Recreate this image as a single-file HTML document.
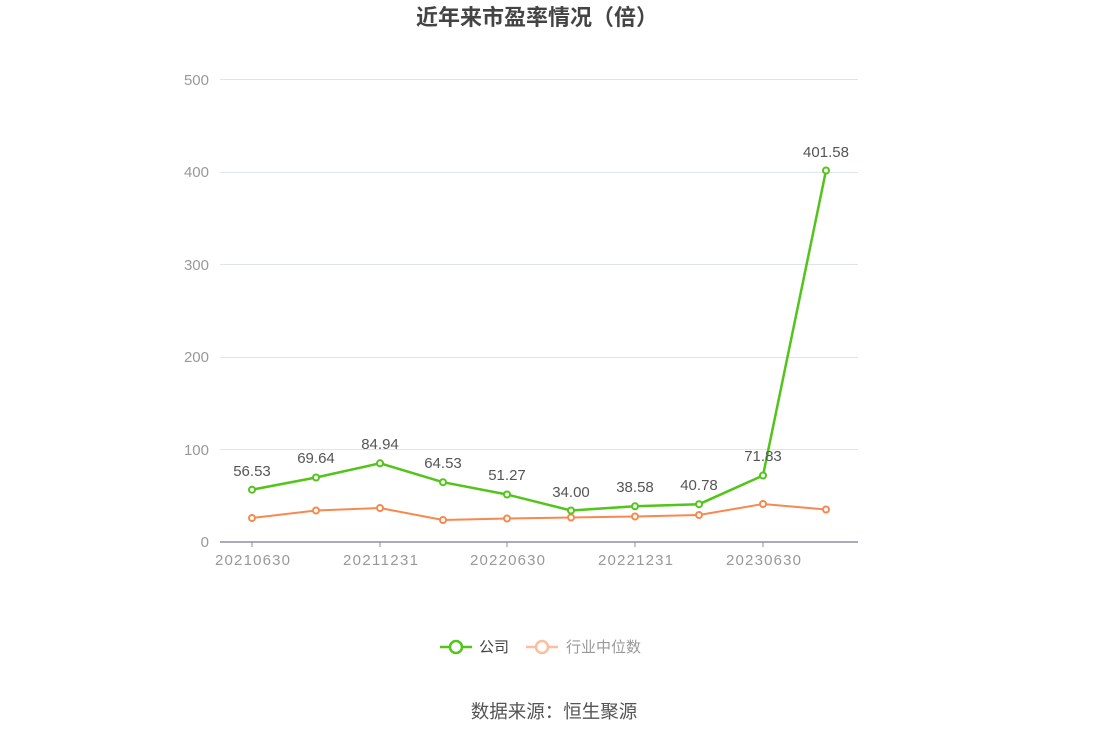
<!DOCTYPE html>
<html><head><meta charset="utf-8"><style>
html,body{margin:0;padding:0;background:#fff;}
svg{display:block;font-family:"Liberation Sans","Noto Sans CJK SC",sans-serif;}
</style></head><body>
<svg width="1109" height="737" viewBox="0 0 1109 737" xmlns="http://www.w3.org/2000/svg">
<text x="537" y="25" text-anchor="middle" font-size="22" font-weight="bold" fill="#444">近年来市盈率情况（倍）</text>
<g stroke="#e0e4ee" stroke-width="1">
<line x1="220" y1="79.5" x2="858" y2="79.5"/>
<line x1="220" y1="172.5" x2="858" y2="172.5"/>
<line x1="220" y1="264.5" x2="858" y2="264.5"/>
<line x1="220" y1="357.5" x2="858" y2="357.5"/>
<line x1="220" y1="449.5" x2="858" y2="449.5"/>
</g>
<line x1="220" y1="542" x2="858" y2="542" stroke="#8a8fa3" stroke-width="1.5"/>
<g stroke="#8a8fa3"><line x1="252" y1="542" x2="252" y2="547"/><line x1="380" y1="542" x2="380" y2="547"/><line x1="507" y1="542" x2="507" y2="547"/><line x1="635" y1="542" x2="635" y2="547"/><line x1="763" y1="542" x2="763" y2="547"/></g>
<g font-size="15" fill="#999" text-anchor="end">
<text x="209" y="85">500</text><text x="209" y="177">400</text><text x="209" y="270">300</text><text x="209" y="362">200</text><text x="209" y="455">100</text><text x="209" y="547">0</text>
</g>
<g font-size="15" fill="#999">
<text x="215" y="565" textLength="75">20210630</text><text x="343" y="565" textLength="75">20211231</text><text x="470" y="565" textLength="75">20220630</text><text x="598" y="565" textLength="75">20221231</text><text x="726" y="565" textLength="75">20230630</text>
</g>
<polyline fill="none" stroke="#f7894f" stroke-width="2" points="252,518 316,510.5 380,508 443,520 507,518.5 571,517.5 635,516.5 699,515 763,504 826,509.5"/>
<g fill="#fff" stroke="#f7894f" stroke-width="2">
<circle cx="252" cy="518" r="3"/><circle cx="316" cy="510.5" r="3"/><circle cx="380" cy="508" r="3"/><circle cx="443" cy="520" r="3"/><circle cx="507" cy="518.5" r="3"/><circle cx="571" cy="517.5" r="3"/><circle cx="635" cy="516.5" r="3"/><circle cx="699" cy="515" r="3"/><circle cx="763" cy="504" r="3"/><circle cx="826" cy="509.5" r="3"/>
</g>
<polyline fill="none" stroke="#52c41a" stroke-width="2.5" points="252,489.7 316,477.5 380,463.3 443,482.2 507,494.5 571,510.5 635,506.3 699,504.2 763,475.5 826,170.5"/>
<g fill="#fff" stroke="#52c41a" stroke-width="2">
<circle cx="252" cy="489.7" r="3"/><circle cx="316" cy="477.5" r="3"/><circle cx="380" cy="463.3" r="3"/><circle cx="443" cy="482.2" r="3"/><circle cx="507" cy="494.5" r="3"/><circle cx="571" cy="510.5" r="3"/><circle cx="635" cy="506.3" r="3"/><circle cx="699" cy="504.2" r="3"/><circle cx="763" cy="475.5" r="3"/><circle cx="826" cy="170.5" r="3"/>
</g>
<g font-size="15" fill="#555" text-anchor="middle">
<text x="252" y="476">56.53</text><text x="316" y="463">69.64</text><text x="380" y="449">84.94</text><text x="443" y="468">64.53</text><text x="507" y="480">51.27</text><text x="571" y="497">34.00</text><text x="635" y="492">38.58</text><text x="699" y="490">40.78</text><text x="763" y="461">71.83</text><text x="826" y="157">401.58</text>
</g>
<line x1="440" y1="647" x2="472" y2="647" stroke="#52c41a" stroke-width="2.5"/>
<circle cx="456" cy="647" r="6" fill="#fff" stroke="#52c41a" stroke-width="2.5"/>
<text x="479" y="652" font-size="15" fill="#444">公司</text>
<line x1="526" y1="647" x2="558" y2="647" stroke="#fbbfa0" stroke-width="2.5"/>
<circle cx="542" cy="647" r="6" fill="#fff" stroke="#fbbfa0" stroke-width="2.5"/>
<text x="566" y="652" font-size="15" fill="#999">行业中位数</text>
<text x="554" y="718" text-anchor="middle" font-size="18.5" fill="#555">数据来源：恒生聚源</text>
</svg>
</body></html>
